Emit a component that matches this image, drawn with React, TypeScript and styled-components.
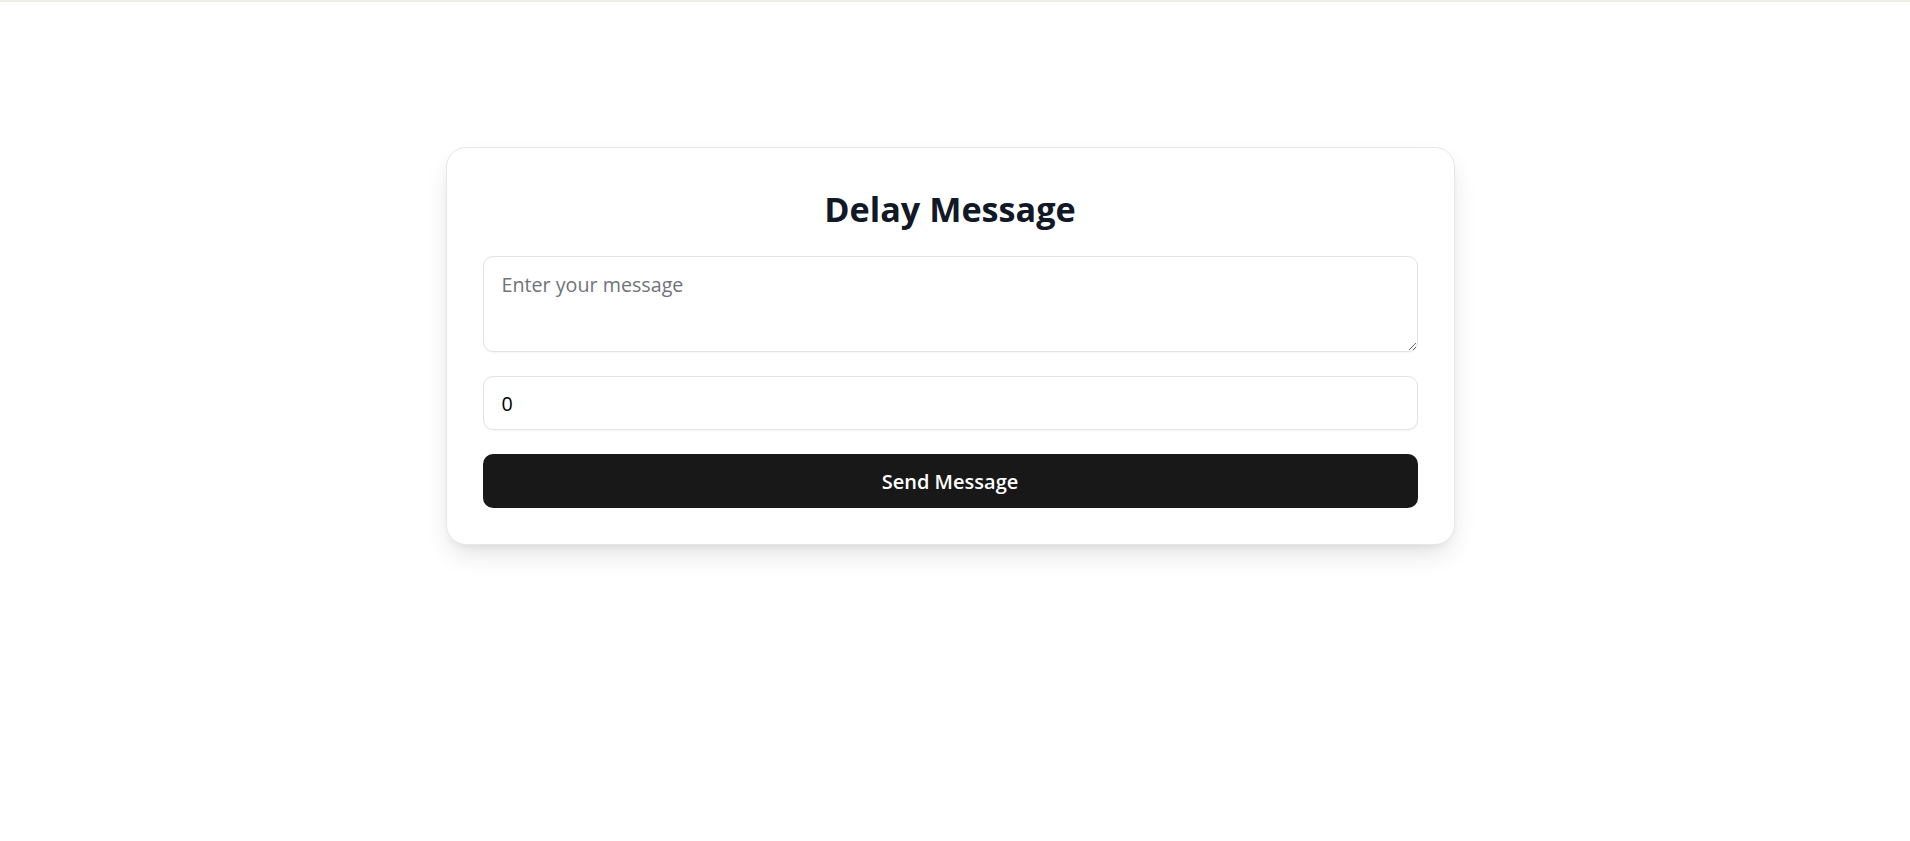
import React, { useState } from 'react';
import styled, { createGlobalStyle } from 'styled-components';

const GlobalStyle = createGlobalStyle`
  html, body {
    margin: 0;
    padding: 0;
    background: #ffffff;
  }
  body {
    font-family: 'Open Sans', 'Noto Sans', Arial, sans-serif;
    border-top: 2px solid #f1efe1;
  }
  * {
    box-sizing: border-box;
  }
`;

const Page = styled.div`
  min-height: 839px;
  display: flex;
  justify-content: center;
  align-items: flex-start;
  padding: 145px 10px 0 0;
`;

const Card = styled.form`
  width: 1009px;
  background: #ffffff;
  border: 1px solid #e5e7eb;
  border-radius: 20px;
  padding: 36px;
  display: flex;
  flex-direction: column;
  gap: 24px;
  box-shadow: 0 12px 28px -6px rgba(0, 0, 0, 0.14),
    0 4px 8px -4px rgba(0, 0, 0, 0.08);
`;

const Title = styled.h2`
  margin: 0 0 -2px;
  font-size: 34.2px;
  line-height: 50px;
  font-weight: 700;
  color: #111827;
  text-align: center;
`;

const fieldBase = `
  width: 100%;
  border: 1px solid #e2e3e6;
  border-radius: 10px;
  background: #ffffff;
  font-family: 'Open Sans', 'Noto Sans', Arial, sans-serif;
  font-size: 19.7px;
  color: #000000;
  outline: none;
  box-shadow: 0 1px 2px rgba(0, 0, 0, 0.04);
  &::placeholder {
    color: #6f737a;
  }
`;

const MessageArea = styled.textarea`
  ${fieldBase}
  height: 96px;
  padding: 14px 18px;
  line-height: 28px;
  resize: vertical;
`;

const DelayInput = styled.input`
  ${fieldBase}
  height: 54px;
  padding: 0 18px;
`;

const SendButton = styled.button`
  height: 54px;
  border: none;
  border-radius: 10px;
  background: #181818;
  color: #ffffff;
  font-family: 'Open Sans', 'Noto Sans', Arial, sans-serif;
  font-size: 20px;
  font-weight: 600;
  cursor: pointer;
`;

export default function App() {
  const [message, setMessage] = useState('');
  const [delay, setDelay] = useState('0');

  return (
    <>
      <GlobalStyle />
      <Page>
        <Card onSubmit={(e) => e.preventDefault()}>
          <Title>Delay Message</Title>
          <MessageArea
            placeholder="Enter your message"
            value={message}
            onChange={(e) => setMessage(e.target.value)}
          />
          <DelayInput
            type="number"
            value={delay}
            onChange={(e) => setDelay(e.target.value)}
          />
          <SendButton type="submit">Send Message</SendButton>
        </Card>
      </Page>
    </>
  );
}
